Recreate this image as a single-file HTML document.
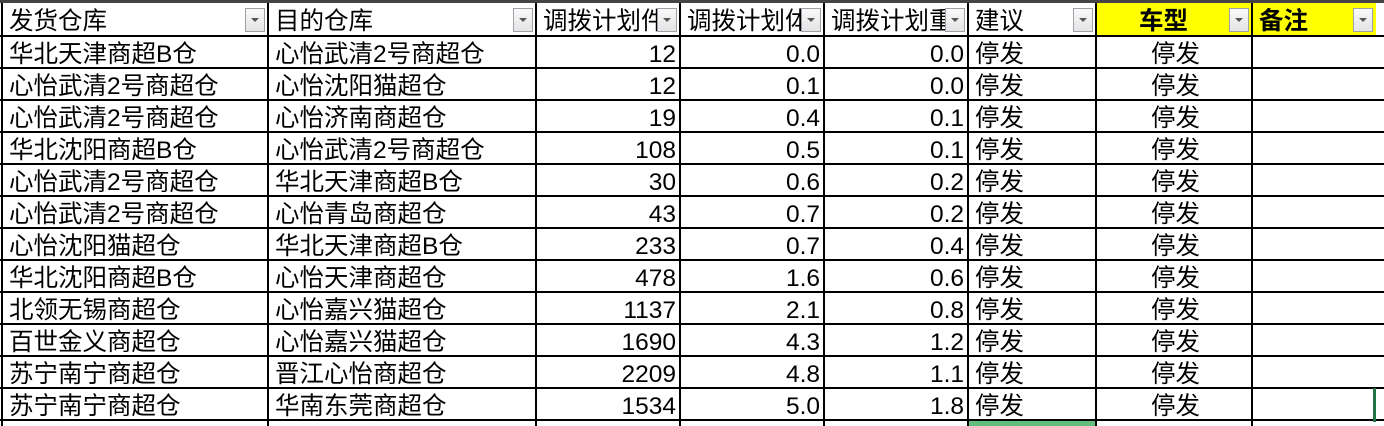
<!DOCTYPE html>
<html><head><meta charset="utf-8"><style>
body{margin:0;width:1384px;height:426px;overflow:hidden;background:#fff;font-family:"Liberation Sans","Noto Sans CJK SC",sans-serif;position:relative}
.top{position:absolute;left:0;top:0;width:1384px;height:3px;background:#444}
.c{position:absolute;height:32px;line-height:35px;font-size:24.5px;color:#000;overflow:hidden;white-space:nowrap;box-sizing:border-box;padding:0 4px 0 6px}
.r{text-align:right}.m{text-align:center}
.hl{position:absolute;left:0;width:1384px;height:2px;background:#000}
.vl{position:absolute;top:3px;width:2px;height:423px;background:#000}
.btn{position:absolute;width:20px;height:24px;top:8px;background:linear-gradient(#fafafa,#e4e4e4);border:1px solid #a0a0a8;box-sizing:border-box}
.btn:after{content:"";position:absolute;left:5px;top:9px;border-left:4px solid transparent;border-right:4px solid transparent;border-top:4px solid #555}
</style></head><body>
<div class="top"></div>
<div style="position:absolute;left:1096px;top:3px;width:280px;height:33px;background:#ffff00"></div>
<div style="position:absolute;left:968px;top:420px;width:128px;height:6px;background:#63be7b"></div>
<div id="g"></div>
<script>
var X=[2,268,536,680,824,968,1096,1252,1376];
var H=["发货仓库","目的仓库","调拨计划件","调拨计划体","调拨计划重","建议","车型","备注"];
var D=[["华北天津商超B仓","心怡武清2号商超仓","12","0.0","0.0"],
["心怡武清2号商超仓","心怡沈阳猫超仓","12","0.1","0.0"],
["心怡武清2号商超仓","心怡济南商超仓","19","0.4","0.1"],
["华北沈阳商超B仓","心怡武清2号商超仓","108","0.5","0.1"],
["心怡武清2号商超仓","华北天津商超B仓","30","0.6","0.2"],
["心怡武清2号商超仓","心怡青岛商超仓","43","0.7","0.2"],
["心怡沈阳猫超仓","华北天津商超B仓","233","0.7","0.4"],
["华北沈阳商超B仓","心怡天津商超仓","478","1.6","0.6"],
["北领无锡商超仓","心怡嘉兴猫超仓","1137","2.1","0.8"],
["百世金义商超仓","心怡嘉兴猫超仓","1690","4.3","1.2"],
["苏宁南宁商超仓","晋江心怡商超仓","2209","4.8","1.1"],
["苏宁南宁商超仓","华南东莞商超仓","1534","5.0","1.8"]];
var s="";
for(var i=0;i<8;i++){
 var w=X[i+1]-X[i];
 var st=i==6?"text-align:center;font-weight:bold;":i==7?"font-weight:bold;":"";
 s+='<div class="c" style="left:'+(X[i]+1)+'px;top:4px;width:'+(w-1)+'px;'+st+(i==6?'padding-left:0;padding-right:22px;':'')+'">'+H[i]+'</div>';
 s+='<div class="btn" style="left:'+(X[i+1]-23)+'px"></div>';
}
for(var r=0;r<12;r++){
 var y=37+r*32;
 var row=D[r].concat(["停发","停发",""]);
 for(var i=0;i<8;i++){
  var cls=(i>=2&&i<=4)?"c r":(i==6?"c m":"c");
  s+='<div class="'+cls+'" style="left:'+(X[i]+1)+'px;top:'+y+'px;width:'+(X[i+1]-X[i]-1)+'px">'+row[i]+'</div>';
 }
}
for(var r=0;r<13;r++) s+='<div class="hl" style="top:'+(35+r*32)+'px"></div>';
for(var i=0;i<8;i++) s+='<div class="vl" style="left:'+(X[i]-1)+'px"></div>';
s+='<div style="position:absolute;left:1373px;top:388px;width:3px;height:34px;background:#217346"></div>';
document.getElementById("g").innerHTML=s;
</script>
</body></html>
